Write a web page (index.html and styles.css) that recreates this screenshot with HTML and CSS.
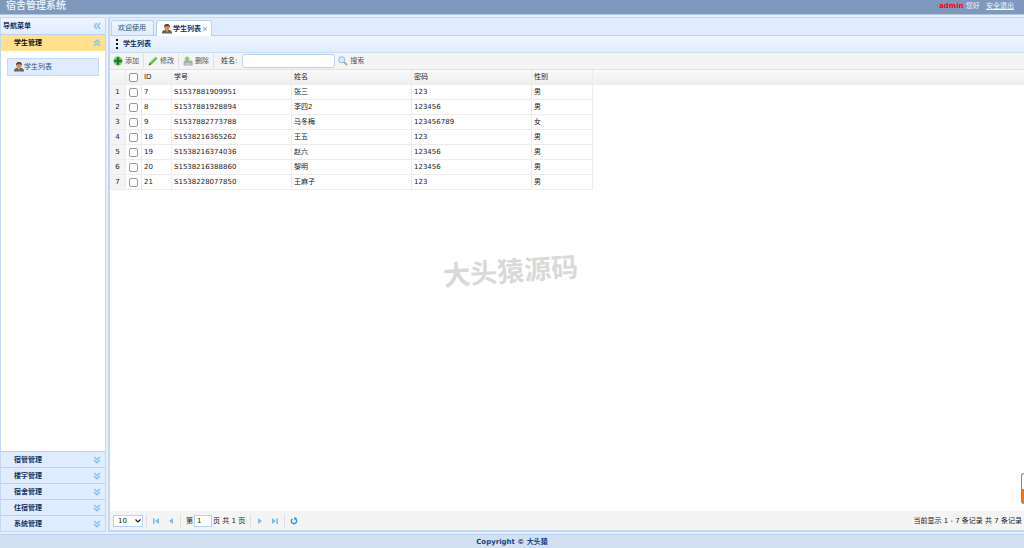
FILE: index.html
```
<!DOCTYPE html>
<html lang="zh-CN">
<head>
<meta charset="utf-8">
<title>宿舍管理系统</title>
<link rel="stylesheet" href="styles.css">
</head>
<body>
<svg class="sprite" aria-hidden="true">
  <symbol id="chevrons" viewBox="0 0 8 8"><path d="M1 1l3 2.5L7 1M1 4.2l3 2.5 3-2.5" fill="none" stroke="#86c5f3" stroke-width="1.5"/></symbol>
  <symbol id="user" viewBox="0 0 16 16"><path d="M0 15c0-4 2-6 8-6s8 2 8 6z" fill="#6b625c"/><path d="M6 9h4l-2 4z" fill="#e5b184"/><ellipse cx="8" cy="5.5" rx="4" ry="4.6" fill="#cf9158"/><path d="M3.500 6C2.500 1 5.500 0 8 0s5.500 1 4.500 6L11 3.500H5z" fill="#65442c"/></symbol>
  <symbol id="first" viewBox="0 0 8 8"><path d="M1 1h1.500v6H1zM7 1v6L3 4z" fill="#77bff3"/></symbol>
  <symbol id="prev" viewBox="0 0 8 8"><path d="M6 1v6L2 4z" fill="#77bff3"/></symbol>
</svg>

<header class="topbar">
  <h1 class="brand">宿舍管理系统</h1>
  <div class="account"><strong class="account-name">admin</strong> 您好 <a class="logout" href="#">安全退出</a></div>
</header>

<div class="workspace">
  <nav class="sidebar">
    <div class="panel-title">导航菜单
      <button class="icon-button" aria-label="收起"><svg class="icon-small turn-left"><use href="#chevrons"/></svg></button>
    </div>
    <button class="section section-open">学生管理<svg class="icon-small turn-up"><use href="#chevrons"/></svg></button>
    <div class="section-body"><a class="menu-link" href="#"><svg class="icon"><use href="#user"/></svg>学生列表</a></div>
    <button class="section">宿管管理<svg class="icon-small"><use href="#chevrons"/></svg></button>
    <button class="section">楼宇管理<svg class="icon-small"><use href="#chevrons"/></svg></button>
    <button class="section">宿舍管理<svg class="icon-small"><use href="#chevrons"/></svg></button>
    <button class="section">住宿管理<svg class="icon-small"><use href="#chevrons"/></svg></button>
    <button class="section">系统管理<svg class="icon-small"><use href="#chevrons"/></svg></button>
  </nav>

  <main class="content">
    <div class="tabs">
      <button class="tab">欢迎使用</button>
      <button class="tab tab-active"><svg class="icon"><use href="#user"/></svg>学生列表<span class="tab-close">×</span></button>
    </div>
    <h2 class="panel-title panel-title-main"><svg class="dots" viewBox="0 0 4 10"><path d="M1 0h2v2H1zM1 4h2v2H1zM1 8h2v2H1z" fill="#111"/></svg>学生列表</h2>
    <div class="toolbar">
      <button class="tool"><svg class="icon" viewBox="0 0 16 16"><circle cx="8" cy="8" r="7.500" fill="#8ccb86"/><path d="M6 2h4v4h4v4h-4v4H6v-4H2V6h4z" fill="#12801c"/></svg>添加</button>
      <button class="tool"><svg class="icon" viewBox="0 0 16 16"><path d="M1 15l2-5 9-9 3 3-9 9z" fill="#55b83b"/><path d="M4 11l9-9" stroke="#a5e38b" stroke-width="1.500"/><path d="M1 15l1.500-4 2.500 2.500z" fill="#4d5a40"/></svg>修改</button>
      <button class="tool"><svg class="icon" viewBox="0 0 16 16"><path d="M1 9l2-2h11l1.500 2v6H1z" fill="#a9afae"/><path d="M3 12h10v1.500H3z" fill="#dcdfdc"/><path d="M4 10V5H1.500L6.500 0l5 5H9v5z" fill="#8ac477"/></svg>删除</button>
      <label class="search-label" for="student-name">姓名:</label>
      <input class="search-input" id="student-name" type="text">
      <button class="tool tool-last"><svg class="icon" viewBox="0 0 16 16"><path d="M9 9l5.500 5.500" stroke="#d79b5d" stroke-width="3"/><circle cx="6" cy="6" r="5" fill="#cfe9ff" stroke="#8bb9e8" stroke-width="1.500"/></svg>搜索</button>
    </div>
    <div class="grid-area">
      <table class="grid">
        <colgroup><col class="col-index"><col class="col-check"><col class="col-id"><col class="col-wide"><col class="col-wide"><col class="col-wide"><col class="col-sex"><col></colgroup>
        <thead><tr><th></th><th><input class="check" type="checkbox" aria-label="全选"></th><th>ID</th><th>学号</th><th>姓名</th><th>密码</th><th>性别</th><th></th></tr></thead>
        <tbody>
          <tr><td>1</td><td><input class="check" type="checkbox" aria-label="张三"></td><td>7</td><td>S1537881909951</td><td>张三</td><td>123</td><td>男</td><td></td></tr>
          <tr><td>2</td><td><input class="check" type="checkbox" aria-label="李四2"></td><td>8</td><td>S1537881928894</td><td>李四2</td><td>123456</td><td>男</td><td></td></tr>
          <tr><td>3</td><td><input class="check" type="checkbox" aria-label="马冬梅"></td><td>9</td><td>S1537882773788</td><td>马冬梅</td><td>123456789</td><td>女</td><td></td></tr>
          <tr><td>4</td><td><input class="check" type="checkbox" aria-label="王五"></td><td>18</td><td>S1538216365262</td><td>王五</td><td>123</td><td>男</td><td></td></tr>
          <tr><td>5</td><td><input class="check" type="checkbox" aria-label="赵六"></td><td>19</td><td>S1538216374036</td><td>赵六</td><td>123456</td><td>男</td><td></td></tr>
          <tr><td>6</td><td><input class="check" type="checkbox" aria-label="黎明"></td><td>20</td><td>S1538216388860</td><td>黎明</td><td>123456</td><td>男</td><td></td></tr>
          <tr><td>7</td><td><input class="check" type="checkbox" aria-label="王麻子"></td><td>21</td><td>S1538228077850</td><td>王麻子</td><td>123</td><td>男</td><td></td></tr>
        </tbody>
      </table>
    </div>
    <div class="pager">
      <span class="select-box">
        <select class="page-size" aria-label="每页记录数"><option>10</option></select>
        <svg class="select-arrow" viewBox="0 0 6 6"><path d="M0.500 1.500L3 4l2.500-2.500" fill="none" stroke="#222" stroke-width="1.200"/></svg>
      </span>
      <span class="divider"></span>
      <button class="icon-button" aria-label="首页"><svg class="icon-small"><use href="#first"/></svg></button>
      <button class="icon-button" aria-label="上一页"><svg class="icon-small"><use href="#prev"/></svg></button>
      <span class="divider"></span>
      <label class="page-label" for="page-number">第</label>
      <input class="page-number" id="page-number" type="text" value="1">
      <span class="page-total">页 共 1 页</span>
      <span class="divider"></span>
      <button class="icon-button" aria-label="下一页"><svg class="icon-small flip"><use href="#prev"/></svg></button>
      <button class="icon-button" aria-label="末页"><svg class="icon-small flip"><use href="#first"/></svg></button>
      <span class="divider"></span>
      <button class="icon-button" aria-label="刷新"><svg class="icon-small" viewBox="0 0 8 8"><path d="M2.500 1.800a2.700 2.700 0 1 0 3 0" fill="none" stroke="#3695d5" stroke-width="1.400"/><path d="M4.300 0v3.500L7 1z" fill="#3695d5"/></svg></button>
      <span class="page-info">当前显示 1 - 7 条记录 共 7 条记录</span>
    </div>
  </main>
</div>

<footer class="footer">Copyright © 大头猿</footer>
<div class="watermark">大头猿源码</div>
<div class="side-widget"></div>
</body>
</html>
```
FILE: styles.css
```
* { box-sizing: border-box; }

body {
  margin: 0;
  height: 100vh;
  display: flex;
  flex-direction: column;
  position: relative;
  overflow: hidden;
  background: #e6f0fd;
  color: #222;
  font: 7px/14px "DejaVu Sans", "Noto Sans CJK SC", sans-serif;
}

button, input, select { font: inherit; color: inherit; margin: 0; }
button { border: 0; padding: 0; background: none; }

.sprite { position: absolute; width: 0; height: 0; }
.icon { width: 10px; height: 10px; flex: none; }
.icon-small { width: 8px; height: 8px; flex: none; display: block; }
.turn-left { transform: rotate(90deg); }
.turn-up { transform: rotate(180deg); }
.flip { transform: rotate(180deg); }
.icon-button { display: flex; align-items: center; justify-content: center; }

.topbar {
  display: flex;
  justify-content: space-between;
  flex: none;
  height: 15px;
  padding: 0 10px 0 6px;
  border-bottom: 1px solid #b1c3df;
  background: #7f99be;
  color: #fff;
  line-height: 12px;
}
.brand { margin: 0; font-size: 10px; font-weight: 500; color: #eef3fa; }
.account-name { color: #f00; }
.account { color: #eef3fa; }
.logout { margin-left: 4px; color: inherit; }

.workspace { flex: 1; min-height: 0; display: flex; gap: 2px; padding: 2px 0; }

.sidebar {
  flex: none;
  width: 106px;
  display: flex;
  flex-direction: column;
  border: 1px solid #c3d8f7;
  background: #fff;
}
.panel-title {
  display: flex;
  align-items: center;
  justify-content: space-between;
  flex: none;
  height: 16px;
  margin: 0;
  padding: 0 4px 0 2px;
  background: linear-gradient(#eff5ff, #e0ecff);
  color: #173264;
  font-size: 7px;
  font-weight: bold;
}
.section {
  display: flex;
  align-items: center;
  justify-content: space-between;
  flex: none;
  height: 16px;
  padding: 0 4px 0 13px;
  border-top: 1px solid #b9d1f5;
  background: #e0ecff;
  color: #173264;
  font-weight: bold;
}
.section-open { height: 17px; background: #ffe08c; color: #111; }
.section-body { flex: 1; padding: 7px 6px; }
.menu-link {
  display: flex;
  align-items: center;
  height: 18px;
  padding-left: 6px;
  border: 1px solid #c4daf9;
  background: #e0ecff;
  color: #31547f;
  text-decoration: none;
}

.content {
  flex: 1;
  min-width: 0;
  display: flex;
  flex-direction: column;
  border: 1px solid #c3d8f7;
  border-left-width: 2px;
  border-right: 0;
  border-bottom-width: 2px;
  background: #fff;
}
.tabs {
  display: flex;
  gap: 2px;
  flex: none;
  height: 18px;
  padding: 2px 1px 0;
  border-bottom: 1px solid #b9d1f5;
  background: #e0ecff;
}
.tab {
  display: flex;
  align-items: center;
  height: 15px;
  padding: 0 7px 0 6px;
  border: 1px solid #b9d1f5;
  border-bottom: 0;
  border-radius: 3px 3px 0 0;
  background: linear-gradient(#eff5ff, #e0ecff);
  color: #31547f;
}
.tab-active { height: 16px; padding: 0 3px 0 5px; gap: 1px; background: #fff; color: #173264; font-weight: bold; }
.tab-close { color: #7da7dd; }
.panel-title-main { justify-content: flex-start; gap: 4px; padding-left: 5px; }
.dots { width: 4px; height: 10px; }

.toolbar {
  display: flex;
  align-items: center;
  flex: none;
  height: 18px;
  padding-left: 3px;
  border-top: 1px solid #cbdcf5;
  border-bottom: 1px solid #e2e2e2;
  background: #f4f4f4;
  color: #555;
}
.tool {
  display: flex;
  align-items: center;
  gap: 2px;
  height: 14px;
  padding-right: 4px;
  margin-right: 4px;
  border-right: 1px solid #e0e0e0;
}
.tool-last { border: 0; }
.search-label { margin: 0 5px 0 3px; color: #333; }
.search-input { width: 93px; height: 14px; margin-right: 3px; border: 1px solid #b9d1f5; border-radius: 3px; background: #fff; }

.grid-area { flex: 1; min-height: 0; overflow: hidden; }
.grid { width: 100%; table-layout: fixed; border-collapse: separate; border-spacing: 0; }
.col-index, .col-check { width: 16px; }
.col-id { width: 30px; }
.col-wide { width: 120px; }
.col-sex { width: 61px; }
.grid th, .grid td {
  height: 15px;
  padding: 0 0 0 2px;
  border-right: 1px solid #ececec;
  border-bottom: 1px solid #ececec;
  font-weight: normal;
  text-align: left;
  white-space: nowrap;
}
.grid th { background: linear-gradient(#fafafa, #efefef); }
.grid td:first-child { padding: 0; background: #f4f4f4; text-align: center; }
.grid th:nth-child(2), .grid td:nth-child(2) { padding: 0; }
.grid th:last-child { border-right: 0; }
.grid td:last-child { border: 0; }
.check {
  display: block;
  width: 9px;
  height: 9px;
  margin: 0 auto;
  appearance: none;
  border: 1px solid #9a9a9a;
  border-radius: 2px;
  background: #fff;
}

.pager {
  display: flex;
  align-items: center;
  gap: 3px;
  flex: none;
  height: 19px;
  padding: 0 2px 0 3px;
  background: #f4f4f4;
}
.pager .icon-button { width: 12px; height: 12px; }
.divider { width: 1px; height: 14px; background: #e0e0e0; }
.select-box { display: flex; position: relative; }
.page-size {
  width: 30px;
  height: 12px;
  padding: 0 0 0 4px;
  appearance: none;
  border: 1px solid #b9d1f5;
  border-radius: 0;
  background: #fff;
  line-height: 10px;
}
.select-arrow { position: absolute; right: 2px; top: 3px; width: 6px; height: 6px; pointer-events: none; }
.page-label { margin-left: 2px; }
.page-number { width: 18px; height: 12px; margin: 0 -2px; padding: 0 2px; border: 1px solid #b9d1f5; background: #fff; }
.page-total { margin-right: 2px; }
.page-info { margin-left: auto; }

.footer {
  flex: none;
  height: 14px;
  border-top: 1px solid #b9d1f5;
  background: #d2e0f2;
  color: #15428b;
  font-weight: bold;
  text-align: center;
}

.watermark {
  position: absolute;
  top: 250px;
  left: 443px;
  color: #d9d9d9;
  font: bold 27px/40px "Noto Sans CJK SC", sans-serif;
  transform: rotate(-4deg);
  pointer-events: none;
}
.side-widget {
  position: absolute;
  right: 0;
  top: 473px;
  width: 3px;
  height: 31px;
  border: 1px solid #888;
  border-right: 0;
  border-radius: 3px 0 0 3px;
  background: linear-gradient(#fff 50%, #f27522 50%);
}
```
